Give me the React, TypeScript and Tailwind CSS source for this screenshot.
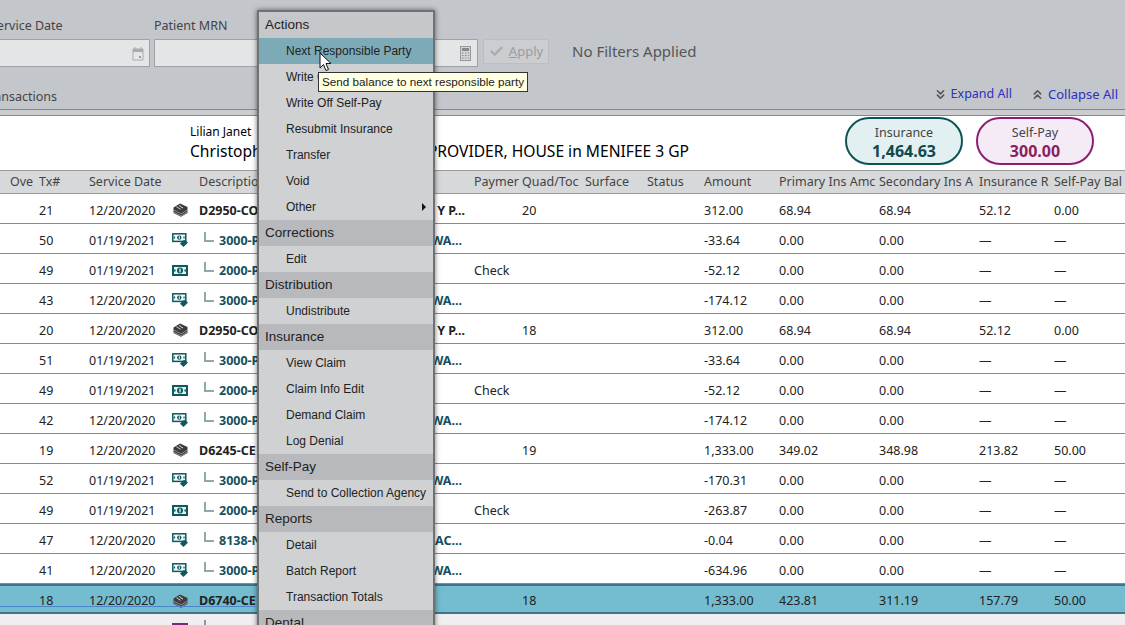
import React from "react";
import { Check, ChevronsDown, ChevronsUp } from "lucide-react";

const seg = "font-['Noto_Sans','Liberation_Sans',sans-serif]";
const cols = "grid grid-cols-[29px_50px_83px_27px_275px_48px_63px_62px_57px_75px_100px_100px_75px_71px] pl-[10px]";

type R = { tx: string; date: string; icon: "stack" | "edit" | "bill"; code: string; end?: string; pay?: string; quad?: string; amt: string; p: string; s: string; i: string; b: string; sel?: boolean };
const st = (tx: string, code: string, end: string, quad: string, amt: string, p: string, s: string, i: string, b: string, sel = false): R => ({ tx, date: "12/20/2020", icon: "stack", code, end, quad, amt, p, s, i, b, sel });
const ch = (tx: string, date: string, icon: "edit" | "bill", code: string, end: string, pay: string, amt: string): R => ({ tx, date, icon, code, end, pay, amt, p: "0.00", s: "0.00", i: "—", b: "—" });
const rows: R[] = [
  st("21", "D2950-CO", "Y P...", "20", "312.00", "68.94", "68.94", "52.12", "0.00"),
  ch("50", "01/19/2021", "edit", "3000-P", "WA...", "", "-33.64"),
  ch("49", "01/19/2021", "bill", "2000-P", "", "Check", "-52.12"),
  ch("43", "12/20/2020", "edit", "3000-P", "WA...", "", "-174.12"),
  st("20", "D2950-CO", "Y P...", "18", "312.00", "68.94", "68.94", "52.12", "0.00"),
  ch("51", "01/19/2021", "edit", "3000-P", "WA...", "", "-33.64"),
  ch("49", "01/19/2021", "bill", "2000-P", "", "Check", "-52.12"),
  ch("42", "12/20/2020", "edit", "3000-P", "WA...", "", "-174.12"),
  st("19", "D6245-CE", "", "19", "1,333.00", "349.02", "348.98", "213.82", "50.00"),
  ch("52", "01/19/2021", "edit", "3000-P", "WA...", "", "-170.31"),
  ch("49", "01/19/2021", "bill", "2000-P", "", "Check", "-263.87"),
  ch("47", "12/20/2020", "edit", "8138-N", "LAC...", "", "-0.04"),
  ch("41", "12/20/2020", "edit", "3000-P", "WA...", "", "-634.96"),
  st("18", "D6740-CE", "", "18", "1,333.00", "423.81", "311.19", "157.79", "50.00", true),
];

const heads = ["Ove", "Tx#", "Service Date", "", "Description", "Paymer", "Quad/Toc", "Surface", "Status", "Amount", "Primary Ins Amc", "Secondary Ins A", "Insurance R", "Self-Pay Bal"];

function TxIcon({ kind }: { kind: R["icon"] }) {
  if (kind === "stack")
    return (
      <svg width="15" height="14" viewBox="0 0 15 14" className="ml-[1px]">
        <path d="M.5 4.5 L7 .5 L14.5 4 L14.5 10 L8 13.7 L.5 10 Z" fill="#3c3c3c" />
        <path d="M3.5 3.8 L5.5 4.8 M6 2.5 L8 3.5 M5.5 5.2 L7.5 6.2 M8 4 L10 5" stroke="#dcdcdc" strokeWidth="1" />
        <path d="M1 7.2 L8 10.8 L14.5 7 M1 9.3 L8 12.8 L14.5 9" stroke="#bdbdbd" strokeWidth=".6" fill="none" />
      </svg>
    );
  if (kind === "bill")
    return (
      <svg width="16" height="11" viewBox="0 0 16 11">
        <rect x="0" y="0" width="16" height="11" fill="#0b5a5e" />
        <rect x="2" y="2" width="12" height="7" fill="#e8f0f0" />
        <circle cx="8" cy="5.5" r="3" fill="#0b5a5e" />
        <rect x="7.3" y="3.6" width="1.4" height="3.8" fill="#e8f0f0" />
        <rect x="2" y="4.5" width="1.5" height="2" fill="#0b5a5e" />
        <rect x="12.5" y="4.5" width="1.5" height="2" fill="#0b5a5e" />
      </svg>
    );
  return (
    <svg width="17" height="14" viewBox="0 0 17 14">
      <rect x=".8" y=".8" width="13" height="7.6" fill="#f8fbfb" stroke="#0b5a5e" strokeWidth="1.5" />
      <circle cx="7.3" cy="4.6" r="2.2" fill="#0b5a5e" />
      <rect x="6.8" y="3.3" width="1" height="2.6" fill="#fff" />
      <path d="M2.5 3.6 v2 M12 3.6 v2" stroke="#0b5a5e" strokeWidth="1.2" />
      <path d="M11 7.5 L13 7 L16 9.5 L11.5 14 L8 10.8 Z" fill="#0b5a5e" />
    </svg>
  );
}

function Row({ r }: { r: R }) {
  const child = r.icon !== "stack";
  return (
    <div className={`${cols} h-[30px] items-center border-b pt-[5px] text-[12.5px] text-[#222] ${r.sel ? "border-t-2 border-b-2 border-t-[#3f7586] border-b-[#3f7586] bg-[#74bccf]" : "border-[#8a8a8a] bg-white"}`}>
      <span />
      <span>{r.tx}</span>
      <span>{r.date}</span>
      <span className="mt-[-2px] flex items-center"><TxIcon kind={r.icon} /></span>
      <span className={`flex items-center font-bold ${child ? "pl-[5px] text-[#16505c]" : "text-[#222]"}`}>
        {child && <span className="mr-[5px] mt-[-8px] h-[10px] w-[10px] border-b-2 border-l-2 border-[#8fa9ab]" />}
        <span>{r.code}</span>
        <span className={`ml-auto ${child ? "mr-[12px] text-[#16505c]" : "mr-[9px] text-[#222]"}`}>{r.end}</span>
      </span>
      <span>{r.pay}</span>
      <span>{r.quad}</span>
      <span />
      <span />
      <span>{r.amt}</span>
      <span>{r.p}</span>
      <span>{r.s}</span>
      <span>{r.i}</span>
      <span>{r.b}</span>
    </div>
  );
}

const menu: [string, "h" | "i" | "a" | "t"][] = [
  ["Actions", "t"], ["Next Responsible Party", "a"], ["Write Off", "i"], ["Write Off Self-Pay", "i"], ["Resubmit Insurance", "i"], ["Transfer", "i"], ["Void", "i"], ["Other", "i"],
  ["Corrections", "h"], ["Edit", "i"], ["Distribution", "h"], ["Undistribute", "i"], ["Insurance", "h"], ["View Claim", "i"], ["Claim Info Edit", "i"], ["Demand Claim", "i"], ["Log Denial", "i"],
  ["Self-Pay", "h"], ["Send to Collection Agency", "i"], ["Reports", "h"], ["Detail", "i"], ["Batch Report", "i"], ["Transaction Totals", "i"], ["Dental", "h"],
];

export default function App() {
  return (
    <div className={`relative h-[625px] w-[1125px] overflow-hidden bg-white ${seg}`}>
      {/* Filter bar */}
      <div className="flex h-[110px] flex-col border-b border-[#85878a] bg-[#c3c6ca] text-[#444]">
        <div className="ml-[-11px] mt-[18px] flex items-end gap-[4px]">
          <div className="flex flex-col">
            <span className="pl-[1px] text-[12.5px] leading-[15px]">Service Date</span>
            <div className="mt-[6px] flex h-[28px] w-[161px] items-center justify-end border border-[#a0a2a5] bg-[#e4e5e7] pr-[5px]">
              <svg width="12" height="15" viewBox="0 0 12 15"><path d="M1 3h10v11H1z" fill="#e6e7e9" stroke="#a9abad" /><path d="M1 3h10v3H1z" fill="#a9abad" /><path d="M3 1v3M9 1v3" stroke="#a9abad" /><rect x="7" y="10" width="2" height="2" fill="#999" /></svg>
            </div>
          </div>
          <div className="flex flex-col">
            <span className="text-[12.5px] leading-[15px]">Patient MRN</span>
            <div className="mt-[6px] flex h-[28px] w-[324px] items-center justify-end border border-[#a0a2a5] bg-[#e4e5e7] pr-[6px]">
              <svg width="11" height="15" viewBox="0 0 11 15"><rect x=".5" y=".5" width="10" height="14" fill="#d4d5d7" stroke="#999" /><rect x="2" y="2" width="7" height="3" fill="#888" /><path d="M2 7h1.5M5 7h1.5M8 7h1M2 9.5h1.5M5 9.5h1.5M8 9.5h1M2 12h1.5M5 12h1.5M8 12h1" stroke="#888" /></svg>
            </div>
          </div>
          <button className="mb-[3px] ml-[1px] flex h-[25px] w-[66px] items-center justify-center gap-[5px] border border-[#bcbec0] bg-[#cbcdd0] text-[13px] text-[#9a9ca0]">
            <Check size={15} strokeWidth={3.5} className="text-[#a8aaad]" />
            <span><u>A</u>pply</span>
          </button>
          <span className="mb-[5px] ml-[19px] text-[15px] leading-[22px] text-[#555]">No Filters Applied</span>
        </div>
        <div className="mt-[18px] flex items-start pr-[7px]">
          <span className="ml-[-17px] mt-[3px] text-[12.5px] leading-[18px]">Transactions</span>
          <span className="ml-auto flex items-center gap-[3px] text-[12.5px] leading-[18px] text-[#2b2fc4]"><ChevronsDown size={15} strokeWidth={2.5} className="text-[#555]" />Expand All</span>
          <span className="ml-[18px] flex items-center gap-[3px] text-[13px] leading-[18px] text-[#2b2fc4]"><ChevronsUp size={15} strokeWidth={2.5} className="text-[#555]" />Collapse All</span>
        </div>
      </div>
      <div className="h-[6px] border-b border-[#85878a] bg-[#cbcdd0]" />

      {/* Patient header */}
      <div className="flex h-[54px] items-start bg-white pl-[190px]">
        <div className="flex flex-col text-black">
          <span className="mt-[7px] text-[12px] leading-[17px]">Lilian Janet</span>
          <span className="whitespace-nowrap text-[15.6px] leading-[22px]">Christopher, Somebody Mo with PROVIDER, HOUSE in MENIFEE 3 GP</span>
        </div>
        <div className="absolute right-[31px] top-[117px] flex gap-[13px]">
          <div className="flex h-[48px] w-[118px] flex-col items-center justify-center rounded-[24px] border-2 border-[#0e5354] bg-[#e2f0f1] pt-[3px]">
            <span className="text-[12.5px] leading-[17px] text-[#444]">Insurance</span>
            <span className="text-[16px] font-bold leading-[20px] text-[#0e4a4c]">1,464.63</span>
          </div>
          <div className="flex h-[48px] w-[118px] flex-col items-center justify-center rounded-[24px] border-2 border-[#8a1f72] bg-[#f5ebf6] pt-[3px]">
            <span className="text-[12.5px] leading-[17px] text-[#444]">Self-Pay</span>
            <span className="text-[16px] font-bold leading-[20px] text-[#8a1f60]">300.00</span>
          </div>
        </div>
      </div>

      {/* Table */}
      <div className={`${cols} h-[24px] items-center overflow-hidden border-y border-[#9a9a9a] bg-[#d6d8da] text-[12.5px] text-[#444]`}>
        {heads.map((h, i) => <span key={i} className="overflow-hidden whitespace-nowrap">{h}</span>)}
      </div>
      {rows.map((r, i) => <Row key={i} r={r} />)}
      <div className={`${cols} h-[12px] items-start overflow-hidden bg-[#efefef]`}>
        <span /><span /><span />
        <span className="mt-[9px] h-[4px] w-[16px] bg-[#7a2a78]" />
        <span className="ml-[5px] mt-[6px] h-[8px] w-[2px] bg-[#a58ba5]" />
      </div>

      {/* Context menu */}
      <div className="absolute left-[257px] top-[10px] h-[640px] w-[178px] overflow-hidden border-2 border-[#6f7173] bg-[#cfd1d3] shadow-[0_0_5px_rgba(0,0,0,0.55)]">
        {menu.map(([t, k]) => (
          <div
            key={t}
            className={`flex h-[26px] items-center font-['Liberation_Sans',sans-serif] text-[12px] text-[#222] ${k === "h" ? "bg-[#b7b9bc] pl-[6px] text-[13.5px]" : k === "t" ? "bg-[#c5c7ca] pl-[6px] text-[13.5px]" : k === "a" ? "bg-[#7cabb7] pl-[27px]" : "pl-[27px]"}`}
          >
            {t}
            {t === "Other" && <span className="ml-auto mr-[7px] h-0 w-0 border-y-[4px] border-l-[4px] border-y-transparent border-l-[#111]" />}
          </div>
        ))}
      </div>

      {/* Tooltip */}
      <div className="absolute left-[318px] top-[72px] border border-[#333] bg-[#ffffe1] px-[3px] font-['Liberation_Sans',sans-serif] text-[11.7px] leading-[18px] text-[#222]">
        Send balance to next responsible party
      </div>

      {/* Cursor */}
      <svg className="absolute left-[319px] top-[52px]" width="13" height="20" viewBox="0 0 13 20">
        <path d="M1 1 L1 16 L4.5 12.5 L7 18.5 L9.5 17.5 L7 11.5 L12 11.5 Z" fill="#fff" stroke="#111" />
      </svg>

      {/* Capture artifact across the selected row */}
      <div className="absolute left-0 top-[606px] h-px w-[257px] bg-[#4a86c8]" />
    </div>
  );
}
